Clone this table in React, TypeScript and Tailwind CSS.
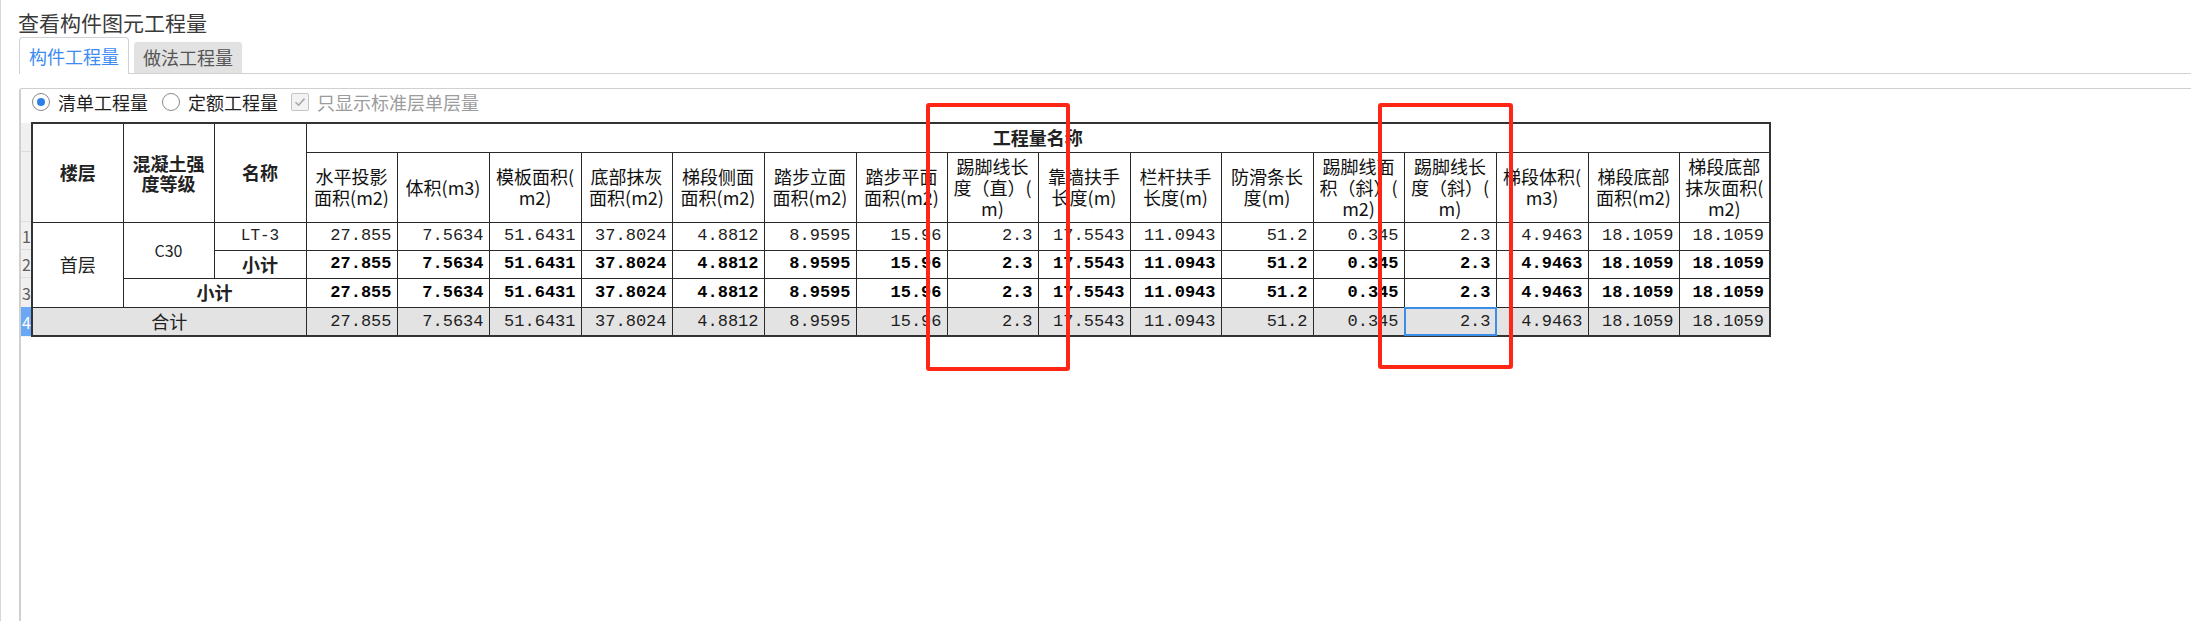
import React from "react";

const colW = [91, 91, 92, 91, 92, 92, 91, 92, 92, 91, 91, 92, 91, 92, 91, 92, 92, 91, 91];

const heads: string[][] = [
  ["水平投影", "面积(m2)"],
  ["体积(m3)"],
  ["模板面积(", "m2)"],
  ["底部抹灰", "面积(m2)"],
  ["梯段侧面", "面积(m2)"],
  ["踏步立面", "面积(m2)"],
  ["踏步平面", "面积(m2)"],
  ["踢脚线长", "度（直）(", "m)"],
  ["靠墙扶手", "长度(m)"],
  ["栏杆扶手", "长度(m)"],
  ["防滑条长", "度(m)"],
  ["踢脚线面", "积（斜）(", "m2)"],
  ["踢脚线长", "度（斜）(", "m)"],
  ["梯段体积(", "m3)"],
  ["梯段底部", "面积(m2)"],
  ["梯段底部", "抹灰面积(", "m2)"],
];

const vals = [
  "27.855", "7.5634", "51.6431", "37.8024", "4.8812", "8.9595", "15.96", "2.3",
  "17.5543", "11.0943", "51.2", "0.345", "2.3", "4.9463", "18.1059", "18.1059",
];

const cell = "border border-[#2a2a2a]";
const numCls =
  "border border-[#2a2a2a] pr-[5px] text-right font-['Liberation_Mono','Noto_Sans_CJK_SC',monospace] text-[17px] whitespace-nowrap";

function DataCells({ bold, grey, sel }: { bold?: boolean; grey?: boolean; sel?: boolean }) {
  return (
    <>
      {vals.map((v, i) => (
        <td
          key={i}
          className={`${numCls} ${bold ? "font-bold text-black" : "text-[#1e1e1e]"} ${grey ? "bg-[#e3e3e3]" : ""} ${
            sel && i === 12 ? "relative" : ""
          }`}
        >
          {sel && i === 12 && (
            <div className="absolute -top-px -left-px -right-px -bottom-px border-2 border-[#3b8ee8]" />
          )}
          <span className="relative">{v}</span>
        </td>
      ))}
    </>
  );
}

function Radio({ on, label }: { on?: boolean; label: string }) {
  return (
    <div className="flex items-center">
      <div className="flex h-[18px] w-[18px] items-center justify-center rounded-full border border-[#8a8a8a] bg-white">
        {on && <div className="h-[8px] w-[8px] rounded-full bg-[#2f7fe6]" />}
      </div>
      <span className="ml-[8px] text-[18px] leading-[24px] text-[#1f1f1f]">{label}</span>
    </div>
  );
}

export default function App() {
  return (
    <div className="relative flex h-[621px] w-[2191px] flex-col overflow-hidden border-l border-[#d6d6d6] bg-white font-['Noto_Sans_CJK_SC',sans-serif] text-[#222]">
      {/* title */}
      <div className="h-[36px] pl-[17px] pt-[8px] text-[21px] leading-[28px] text-[#3a3a3a]">查看构件图元工程量</div>

      {/* tabs */}
      <div className="ml-[18px] flex h-[38px] items-end border-b border-[#cfd2d6]">
        <div className="-mb-px flex h-[37px] w-[110px] items-center justify-center rounded-t-[4px] border border-b-0 border-[#cfd2d6] bg-white text-[18px] text-[#3d8bf2]">
          构件工程量
        </div>
        <div className="ml-[5px] flex h-[31px] w-[108px] items-center justify-center rounded-t-[3px] bg-[#e2e2e2] text-[18px] text-[#555]">
          做法工程量
        </div>
      </div>

      {/* panel */}
      <div className="ml-[18px] mt-[14px] flex flex-1 flex-col rounded-tl-[3px] border-l-2 border-t border-[#d0d0d0]">
        <div className="mb-[7px] flex h-[26px] items-center pl-[11px]">
          <Radio on label="清单工程量" />
          <div className="ml-[14px]">
            <Radio label="定额工程量" />
          </div>
          <div className="ml-[13px] flex items-center">
            <div className="flex h-[18px] w-[18px] items-center justify-center rounded-[2px] border border-[#c4c4c4] bg-[#f3f3f3]">
              <svg width="14" height="14" viewBox="0 0 14 14">
                <path d="M2.5 7.2 L5.6 10.2 L11.5 3.6" fill="none" stroke="#a8a8a8" strokeWidth="1.6" />
              </svg>
            </div>
            <span className="ml-[8px] text-[18px] leading-[24px] text-[#9c9c9c]">只显示标准层单层量</span>
          </div>
        </div>

        <div className="flex">
          {/* row numbers */}
          <div className="mt-px flex w-[10px] flex-col bg-[#f0f0f0] text-[16px] leading-none text-[#5d5d5d]">
            <div className="h-[29px] border-b border-[#dcdcdc]" />
            <div className="h-[70px] border-b border-[#dcdcdc]" />
            <div className="flex h-[28px] items-center border-b border-[#dcdcdc] pl-px">1</div>
            <div className="flex h-[28px] items-center border-b border-[#dcdcdc] pl-px">2</div>
            <div className="flex h-[29px] items-center pl-px">3</div>
            <div className="flex h-[29px] items-center bg-[#6aa7f4] pl-px text-white">4</div>
          </div>

          <table className="table-fixed border-collapse border-2 border-[#333]">
            <colgroup>
              {colW.map((w, i) => (
                <col key={i} className={w === 91 ? "w-[91px]" : "w-[92px]"} />
              ))}
            </colgroup>
            <thead>
              <tr className="h-[29px]">
                <th rowSpan={2} className={`${cell} text-[18px] font-bold`}>楼层</th>
                <th rowSpan={2} className={`${cell} text-[18px] font-bold leading-[20px]`}>
                  混凝土强
                  <br />
                  度等级
                </th>
                <th rowSpan={2} className={`${cell} text-[18px] font-bold`}>名称</th>
                <th colSpan={16} className={`${cell} text-[18px] font-bold`}>工程量名称</th>
              </tr>
              <tr className="h-[70px]">
                {heads.map((h, i) => (
                  <th
                    key={i}
                    className={`${cell} whitespace-nowrap px-[2px] text-center text-[18px] font-normal leading-[21px] text-[#111]`}
                  >
                    {h.map((l, j) => (
                      <div key={j}>{l}</div>
                    ))}
                  </th>
                ))}
              </tr>
            </thead>
            <tbody>
              <tr className="h-[28px]">
                <td rowSpan={3} className={`${cell} text-center text-[18px]`}>首层</td>
                <td rowSpan={2} className={`${cell} text-center text-[16px]`}>C30</td>
                <td className={`${cell} text-center font-['Liberation_Mono',monospace] text-[16px]`}>LT-3</td>
                <DataCells />
              </tr>
              <tr className="h-[28px]">
                <td className={`${cell} text-center text-[18px] font-bold`}>小计</td>
                <DataCells bold />
              </tr>
              <tr className="h-[29px]">
                <td colSpan={2} className={`${cell} text-center text-[18px] font-bold`}>小计</td>
                <DataCells bold />
              </tr>
              <tr className="h-[29px]">
                <td colSpan={3} className={`${cell} bg-[#e3e3e3] text-center text-[18px]`}>合计</td>
                <DataCells grey sel />
              </tr>
            </tbody>
          </table>
        </div>
      </div>

      {/* red annotation boxes */}
      <div className="absolute left-[925px] top-[103px] h-[268px] w-[144px] rounded-[3px] border-4 border-[#ff2616]" />
      <div className="absolute left-[1377px] top-[103px] h-[266px] w-[135px] rounded-[3px] border-4 border-[#ff2616]" />
    </div>
  );
}
